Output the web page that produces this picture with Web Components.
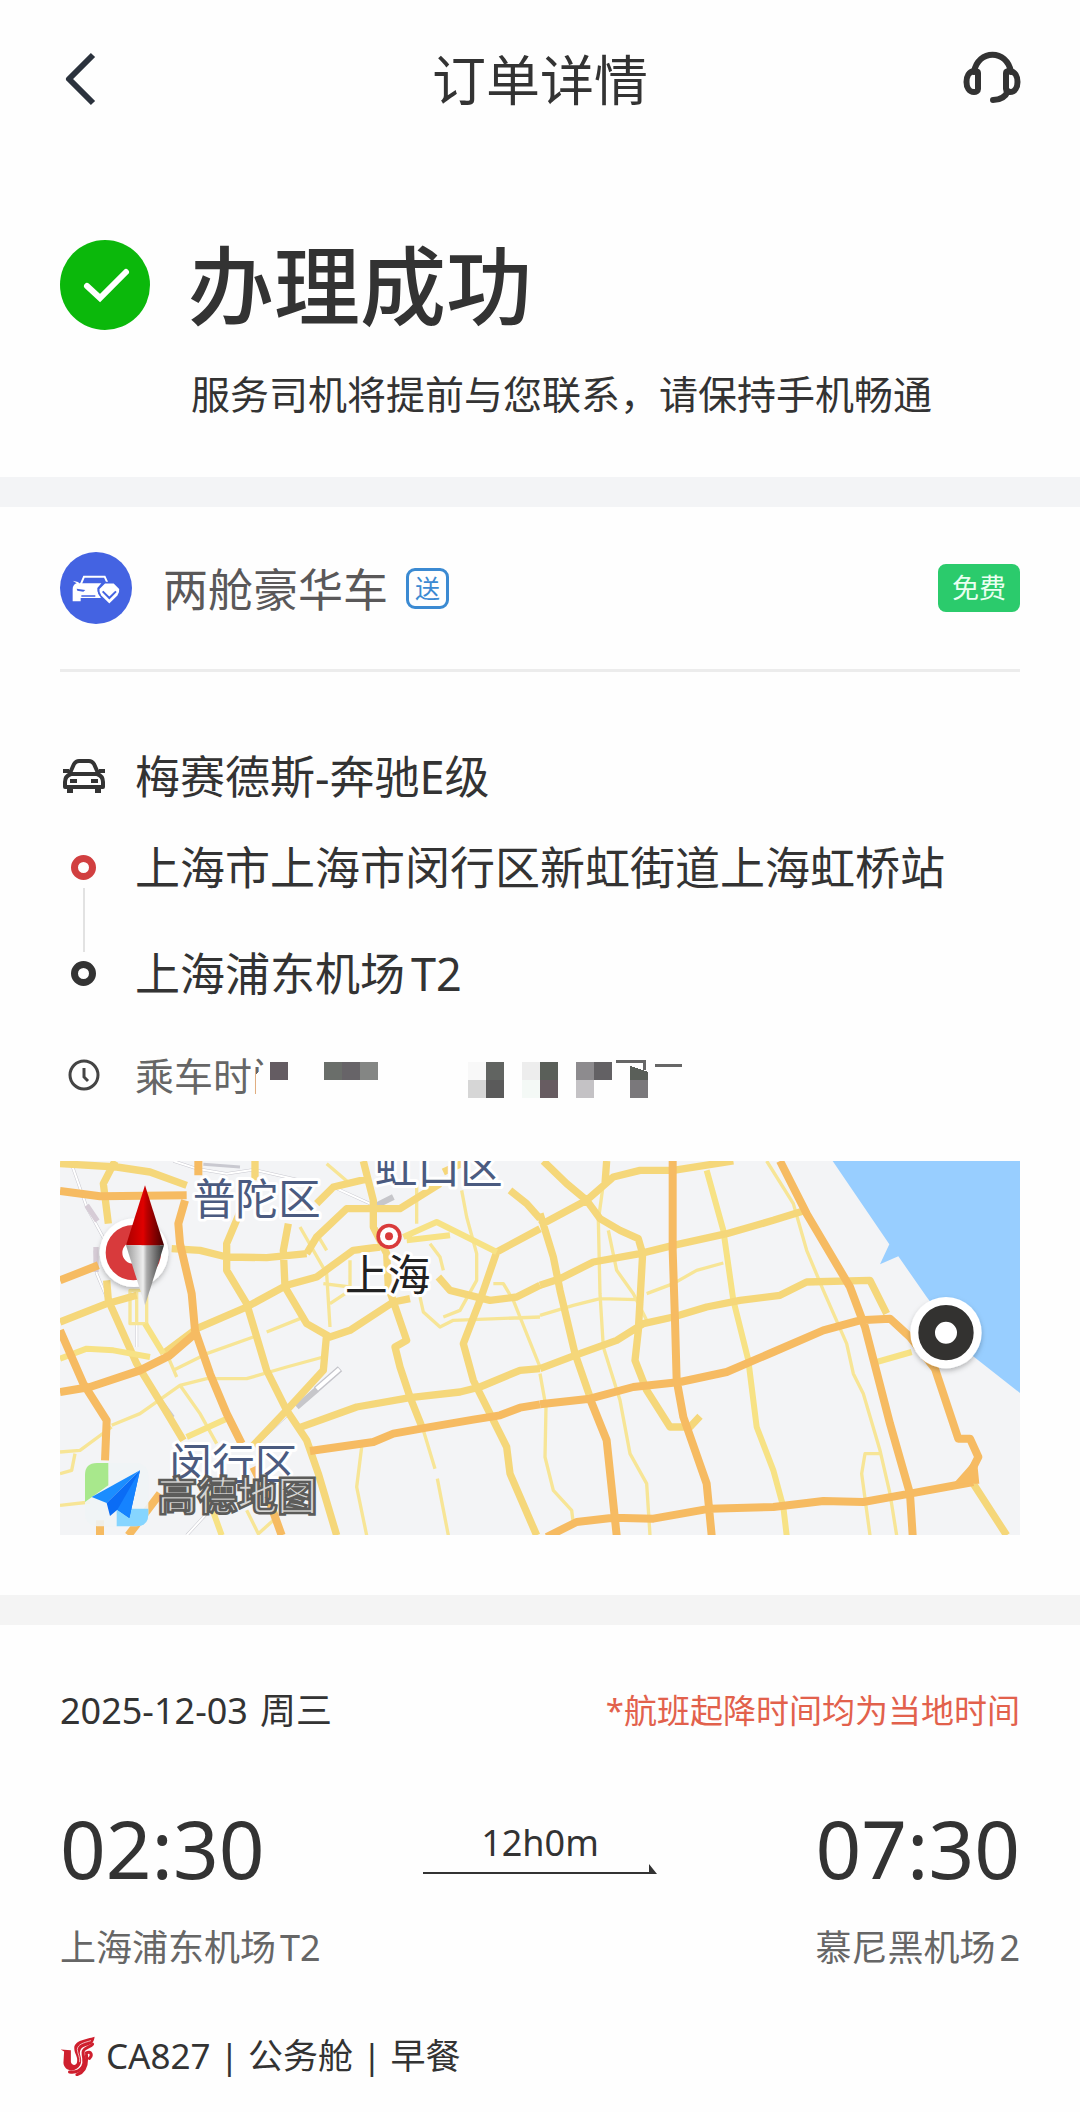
<!DOCTYPE html>
<html lang="zh-CN">
<head>
<meta charset="utf-8">
<meta name="viewport" content="width=device-width, initial-scale=1">
<title>订单详情</title>
<style>
  body {
    margin: 0;
    background: #fefefe;
    color: #333;
    font-family: "Noto Sans", "Noto Sans CJK SC", sans-serif;
  }
</style>
</head>
<body>
<order-header>订单详情</order-header>
<main>
  <order-status>
    办理成功
    <span slot="note">服务司机将提前与您联系，请保持手机畅通</span>
  </order-status>
  <ride-card></ride-card>
  <flight-card></flight-card>
</main>

<script>
// small helper: every element sets its markup the same way
class BaseElement extends HTMLElement {
  constructor() {
    super();
    this.attachShadow({ mode: "open" });
    this.shadowRoot.innerHTML = this.template();
  }
}

class OrderHeader extends BaseElement {
  template() {
    return `
      <style>
        :host { display: block; }
        header {
          display: grid;
          grid-template-columns: 60px 1fr 60px;
          align-items: center;
          height: 160px;
          padding: 0 58px;
        }
        h1 { margin: 0; font-size: 54px; font-weight: 400; line-height: 72px; text-align: center; }
        button { border: 0; padding: 0; background: none; width: 60px; height: 60px; }
        svg { display: block; width: 60px; height: 60px; fill: none; stroke-linejoin: round; }
      </style>
      <header>
        <button type="button" aria-label="返回">
          <svg viewBox="0 0 60 60" stroke="#2b323d" stroke-width="6"><path d="M35 5 L11 29 L35 53"/></svg>
        </button>
        <h1><slot></slot></h1>
        <button type="button" aria-label="客服">
          <svg viewBox="0 0 60 60" stroke="#333" stroke-width="6" stroke-linecap="round">
            <path d="M12 22 C16 -1 45 -1 49 22"/>
            <path d="M16 23 V39 C16 41 14 42 12 42 C2 42 2 22 12 21 C14 21 16 21 16 23 Z"/>
            <path d="M44 23 V39 C44 41 46 42 48 42 C58 42 58 22 48 21 C46 21 44 21 44 23 Z"/>
            <path d="M46 41 C43 48 37 50 31 50"/>
          </svg>
        </button>
      </header>`;
  }
}
customElements.define("order-header", OrderHeader);

class OrderStatus extends BaseElement {
  template() {
    return `
      <style>
        :host {
          display: grid;
          grid-template-columns: 90px 1fr;
          column-gap: 38px;
          row-gap: 36px;
          padding: 80px 60px 57px;
        }
        svg { width: 90px; height: 90px; }
        h2 { margin: 0; font-size: 86px; font-weight: 500; line-height: 92px; }
        p { grid-column: 2; margin: 0 0 0 3px; font-size: 39px; line-height: 52px; }
      </style>
      <svg viewBox="0 0 90 90" aria-hidden="true">
        <circle cx="45" cy="45" r="45" fill="#0bb80b"/>
        <path d="M27 46 L40 58 L66 32" fill="none" stroke="#fff" stroke-width="6" stroke-linecap="round"/>
      </svg>
      <h2><slot></slot></h2>
      <p><slot name="note"></slot></p>`;
  }
}
customElements.define("order-status", OrderStatus);

// one line of the trip: an icon and its text, "linked" draws the line to the next one
class RideStop extends BaseElement {
  template() {
    return `
      <style>
        :host { display: grid; grid-template-columns: 47px 1fr; column-gap: 28px; font-size: 45px; line-height: 60px; }
        .marker { display: flex; flex-direction: column; align-items: center; }
        .icon { display: flex; flex: none; align-items: center; justify-content: center; height: 58px; }
        .line { display: none; flex: 1; width: 2px; margin: -8px 0 -8px; background: #e2e2e2; }
        :host([linked]) .line { display: block; }
        :host([linked]) .text { padding-bottom: 46px; }
        :host([muted]) { font-size: 39px; color: #666; }
        .text { position: relative; }
      </style>
      <div class="marker">
        <div class="icon"><slot name="icon"></slot></div>
        <div class="line"></div>
      </div>
      <div class="text"><slot></slot></div>`;
  }
}
customElements.define("ride-stop", RideStop);

// blocks that hide the private part of the ride time
class TimeMosaic extends BaseElement {
  template() {
    const blocks = [
      [18, 0, "#645c62"],
      [72, 0, "#6a6e6a"], [90, 0, "#676468"], [108, 0, "#848684"],
      [216, 0, "#f8f8f8"], [216, 18, "#d6d6d6"], [234, 0, "#616461"], [234, 18, "#5a5a5a"],
      [270, 0, "#ededed"], [270, 18, "#f4f9f6"], [288, 0, "#5a5f59"], [288, 18, "#675c61"],
      [324, 0, "#8d8b8e"], [324, 18, "#c4c2c5"], [342, 0, "#636164"],
      [378, 18, "#7a787b"]
    ];
    const rects = blocks.map(([x, y, c]) => `<rect x="${x}" y="${y + 6}" width="18" height="18" fill="${c}"/>`).join("");
    return `
      <style>
        :host { position: absolute; left: 117px; top: 10px; }
        svg { display: block; width: 432px; height: 50px; }
      </style>
      <svg viewBox="0 0 432 50" shape-rendering="crispEdges" aria-hidden="true">
        <path d="M12 0 H432 V50 H0 V38 H4 V18 L12 12 Z" fill="#fefefe"/>
        ${rects}
        <path d="M378 10 L396 16 V24 H378 Z" fill="#5a5f59"/>
        <path d="M364 5 H392 V14 M403 9 H430" fill="none" stroke="#666" stroke-width="3"/>
      </svg>`;
  }
}
customElements.define("time-mosaic", TimeMosaic);

class CityMap extends BaseElement {
  template() {
    return `
      <style>
        :host { display: block; }
        svg { display: block; width: 100%; height: auto; font-size: 128px; }
        .thin, .road, .main, .rail { fill: none; stroke-linejoin: round; }
        .thin { stroke: #f7e596; stroke-width: 10; }
        .road { stroke: #f5d77a; stroke-width: 22; }
        .light { stroke: #f7e285; stroke-width: 18; }
        .main { stroke: #f6bb62; stroke-width: 24; }
        .rail { stroke: #c9c9d0; stroke-width: 9; }
        .rail-in { stroke: #fff; stroke-width: 6; }
        .district { fill: #4b5b80; }
        .label { stroke: #fff; stroke-width: 18; stroke-linejoin: round; paint-order: stroke; text-anchor: middle; }
        .city { fill: #222; }
        .brand { fill: #d6d6d4; stroke: #5c5c5a; stroke-width: 8; font-size: 120px; font-weight: 700; }
      </style>
      <svg viewBox="60 62 2880 1123" role="img" aria-label="路线地图">
        <defs>
          <linearGradient id="north"><stop offset="0" stop-color="#a00"/><stop offset=".45" stop-color="#e00000"/><stop offset=".55" stop-color="#b00"/><stop offset="1" stop-color="#400"/></linearGradient>
          <linearGradient id="south"><stop offset="0" stop-color="#999"/><stop offset=".45" stop-color="#eee"/><stop offset=".55" stop-color="#aaa"/><stop offset="1" stop-color="#333"/></linearGradient>
          <filter id="shade" x="-20%" y="-20%" width="140%" height="150%"><feDropShadow dx="0" dy="8" stdDeviation="8" flood-opacity=".25"/></filter>
        </defs>
        <rect x="60" y="62" width="2880" height="1123" fill="#f3f4f6"/>
        <path d="M2378 62 L2548 312 2520 372 2575 348 2660 470 2790 640 2940 758 V62 Z" fill="#98ceff"/>

        <!-- west side -->
        <path class="thin" d="M215 855 L300 820 420 735 500 715 620 715 740 680 850 650 M400 690 L500 640 640 590 M680 575 L780 535 M60 935 L120 930 215 860 M60 1000 L95 990 105 940 M420 735 L480 820 530 910 M1150 870 L1185 985 M1192 1015 L1225 1185 M965 920 L950 1040 980 1185 M1140 470 L1150 515 1200 560 1240 540 1500 530 M1170 310 L1200 350 1210 390 M1265 150 L1280 230 1310 340 1310 420 1260 510 1210 530 M780 260 L860 400 870 560 M830 280 L860 330 M850 430 L930 440 M930 360 L930 450 870 490 M380 640 L410 710 M1360 430 L1390 430 1420 480 1500 680 M60 1095 L150 1085 M860 70 L930 130 M620 1110 L655 1180 700 1140 M1130 130 V250"/>
        <path class="rail" d="M95 72 L140 200 200 310 M165 330 L170 400 250 590 290 680 400 830 M290 550 V620 M400 62 L470 85 560 100 640 88 780 120 M490 72 L600 80 M880 140 L990 190 M440 1185 L500 1120 M645 915 L740 825"/>
        <path class="rail rail-in" d="M95 72 L140 200 200 310 M165 330 L170 400 250 590 M290 550 V620 M400 62 L470 85 560 100 640 88 780 120 M880 140 L990 190 M440 1185 L500 1120 M645 915 L740 825"/>
        <path d="M140 195 L172 242 M168 320 V395" stroke="#d6ccd6" stroke-width="16"/>
        <path d="M770 800 L830 748 M1010 195 L1060 170" stroke="#c6c6ca" stroke-width="18"/>
        <path d="M828 748 L900 685" stroke="#c4c4ca" stroke-width="20"/>
        <path d="M830 746 L898 687" stroke="#fff" stroke-width="12"/>
        <path class="thin" d="M270 450 H320 V550 H270 Z M290 450 V550"/>
        <path class="road" d="M60 70 L230 80 330 95 440 135 M225 62 L190 130 205 250 M200 420 L205 480 290 670 370 800 430 900 M60 545 L200 490 290 465 M395 325 L480 330 560 350 680 352 800 340 M600 215 L560 310 560 390 620 490 680 690 740 810 800 900 835 1000 890 1185 M370 640 L470 565 620 500 740 435 830 410 940 330 1020 320 M745 250 L730 330 735 440 800 550 870 590 930 570 1060 485 1110 475 M860 580 L850 690 740 810 640 915 M800 340 L830 290 920 205 1080 205 1200 130 M970 62 L1000 180 1000 260 1040 340 1045 440 1100 600 1065 620 1080 680 1110 770 1150 870 M770 865 L950 800 1110 772 1260 755 1320 740 1440 690 1500 685 M1410 150 L1460 190 1500 235 M1500 265 L1370 335 1320 480 1270 610 1300 720 1350 820 1400 920 1410 1000 1490 1185 M1195 410 L1230 450 1350 480 1430 470 1500 435 M1210 95 L1275 65 M830 190 L880 140 985 115 M645 62 V120"/>
        <path class="road light" d="M1090 290 L1190 245 1370 335 M1100 300 L1230 285 M60 655 L140 625 220 630 330 650 M315 550 L370 640 M500 1060 L545 1185 M440 890 L560 835"/>
        <path class="main" d="M60 152 L180 168 440 165 M475 62 V105 M435 180 L415 250 420 310 455 460 465 570 510 700 560 820 605 910 M60 755 L150 740 300 690 390 645 465 580 M60 420 L175 375 M60 570 L130 730 200 840 195 960 M180 1140 V1185 M810 932 L1000 905 1060 880 1160 862 1300 838 1380 825 1440 802 1500 792 M640 980 L680 1060 725 1185 M360 1060 L265 1185"/>

        <!-- east side -->
        <g transform="translate(1500 0)">
          <path class="thin" d="M0 525 L100 495 180 475 290 478 M190 130 L175 240 180 460 190 620 240 780 270 940 320 1030 330 1185 M205 270 L230 390 280 460 320 540 M320 460 L400 430 470 390 550 368 M680 62 L760 190 800 330 850 450 920 610 940 700 970 760 1020 930 1050 1060 1070 1185 M1020 940 H975 L965 1000 990 1185 M0 700 L18 800 15 950 40 1050 95 1110 100 1150"/>
          <path class="road light" d="M500 90 L550 270 580 480 625 660 650 860 700 990 730 1100 740 1185 M1010 665 L1115 635"/>
          <path class="road" d="M10 62 L80 130 140 180 180 235 240 270 295 295 308 340 295 570 285 660 320 750 390 860 450 860 480 828 M0 255 L140 180 220 110 300 90 400 90 580 62 M200 62 L195 130 M0 220 L40 350 60 450 105 640 150 770 M0 435 L60 415 160 365 300 340 400 315 560 280 700 240 790 212 M0 685 L105 645 230 600 310 550 400 530 500 500 600 480 720 465 800 425 990 420 1040 520 M1300 1030 L1400 1185"/>
          <path class="main" d="M398 62 V330 L405 540 410 720 430 830 500 1030 515 1185 M720 62 L800 220 930 440 975 560 1050 850 1110 1060 1118 1185 M0 792 L150 775 280 740 420 725 560 695 700 635 850 570 960 540 1050 535 1110 590 1185 685 L1255 895 1290 895 1315 950 1285 1010 M20 1190 L110 1145 220 1132 340 1135 510 1105 700 1100 850 1082 970 1085 1110 1060 1300 1025 M150 775 L200 900 230 1185"/>
          <path d="M1310 950 L1318 1030 1240 1030 1280 985 Z" fill="#f6bb62"/>
        </g>

        <text class="label district" x="650" y="225">普陀区</text>
        <text class="label district" x="1196" y="132">虹口区</text>
        <text class="label district" x="580" y="1020">闵行区</text>
        <text class="label city" x="1043" y="452">上海</text>
        <circle cx="1047" cy="288" r="38" fill="#d93b3b"/>
        <circle cx="1047" cy="288" r="27" fill="#fff"/>
        <circle cx="1047" cy="288" r="12" fill="#d93b3b"/>

        <!-- start and end pins -->
        <g filter="url(#shade)"><circle cx="282" cy="337" r="103" fill="#fff"/><circle cx="2718" cy="577" r="107" fill="#fff"/></g>
        <circle cx="280" cy="337" r="58" fill="none" stroke="#d83a3c" stroke-width="50"/>
        <circle cx="2718" cy="577" r="58" fill="none" stroke="#333230" stroke-width="50"/>
        <path d="M315 135 L372 315 H258 Z" fill="url(#north)"/>
        <path d="M315 495 L372 315 H258 Z" fill="url(#south)"/>

        <!-- map provider -->
        <rect x="135" y="968" width="190" height="190" rx="36" fill="#f0f4f6" opacity=".9"/>
        <path d="M171 968 H205 V1035 L135 1085 V1004 Q135 968 171 968 Z" fill="#a8e88c"/>
        <path d="M230 1105 H325 V1122 Q325 1158 289 1158 H230 Z" fill="#86d5ff"/>
        <path d="M300 990 L155 1070 200 1088 Z" fill="#1b8dff"/>
        <path d="M300 990 L200 1088 210 1127 232 1108 268 1133 Z" fill="#0a6cf5"/>
        <path d="M300 990 L232 1108 268 1133 Z" fill="#1583ff"/>
        <text class="brand" x="352" y="1108">高德地图</text>
      </svg>`;
  }
}
customElements.define("city-map", CityMap);

class RideCard extends BaseElement {
  template() {
    return `
      <style>
        :host { display: block; border-top: 30px solid #f3f4f6; padding: 0 60px 60px; }
        .head { display: flex; align-items: center; height: 162px; border-bottom: 3px solid #ececec; }
        .head svg { width: 72px; height: 72px; margin-right: 31px; }
        h3 { margin: 0; font-size: 45px; font-weight: 400; line-height: 60px; padding-top: 3px; color: #5a5859; }
        .tag {
          margin-left: 18px;
          padding: 0 6px;
          border: 3px solid #3b8ad2;
          border-radius: 9px;
          color: #3b8ad2;
          font-size: 25px;
          line-height: 35px;
        }
        .free {
          margin-left: auto;
          padding: 0 14px;
          border-radius: 8px;
          background: #2bcb6c;
          color: #eafff1;
          font-size: 27px;
          line-height: 48px;
        }
        .trip { display: grid; padding: 75px 0 55px; }
        ride-stop:first-child { margin-bottom: 31px; }
        ride-stop[muted] { margin-top: 42px; }
        .latin { margin-left: 6px; }
        ride-stop svg { display: block; }
      </style>
      <section>
        <div class="head">
          <svg viewBox="0 0 216 216" aria-hidden="true">
            <circle cx="108" cy="108" r="108" fill="#4463e2"/>
            <path d="M62 98 L72 74 H134 L142 92" fill="none" stroke="#fff" stroke-width="6"/>
            <path d="M38 86 L54 90 L58 94 H124 L112 108 Q112 128 122 132 V138 H62 V148 H38 V112 Q38 98 50 94 Z" fill="#fff"/>
            <path d="M50 110 L76 114 L70 119 L52 116 Z M64 130 H106 V134 H64 Z" fill="#4463e2"/>
            <path d="M134 92 H162 L180 110 Q182 122 174 132 L148 158 L122 132 Q114 122 116 110 Z" fill="#fff" stroke="#4463e2" stroke-width="5"/>
            <path d="M128 118 L148 138 L168 118" fill="none" stroke="#4463e2" stroke-width="6"/>
          </svg>
          <h3>两舱豪华车</h3>
          <span class="tag">送</span>
          <span class="free">免费</span>
        </div>
        <div class="trip">
          <ride-stop>
            <svg slot="icon" width="44" height="36" viewBox="0 0 44 36" fill="none" stroke="#333" stroke-width="4" stroke-linejoin="round" aria-hidden="true">
              <path d="M8 15 L12 6 Q14 3 17 3 H27 Q30 3 32 6 L36 15 M1 13 H7 M37 13 H43"/>
              <path d="M9 16 H35 Q41 18 41 24 V29 H3 V24 Q3 18 9 16 Z"/>
              <path d="M8 29 V35 M36 29 V35" stroke-width="6"/>
              <path d="M8 23 H15 M29 23 H36" stroke-width="4"/>
            </svg>
            梅赛德斯-奔驰E级
          </ride-stop>
          <ride-stop linked>
            <svg slot="icon" width="25" height="25" viewBox="0 0 25 25" aria-hidden="true"><circle cx="12.5" cy="12.5" r="9" fill="none" stroke="#d13f40" stroke-width="7"/></svg>
            上海市上海市闵行区新虹街道上海虹桥站
          </ride-stop>
          <ride-stop>
            <svg slot="icon" width="25" height="25" viewBox="0 0 25 25" aria-hidden="true"><circle cx="12.5" cy="12.5" r="9" fill="none" stroke="#333" stroke-width="7"/></svg>
            上海浦东机场<span class="latin">T2</span>
          </ride-stop>
          <ride-stop muted>
            <svg slot="icon" width="32" height="32" viewBox="0 0 32 32" fill="none" stroke="#444" stroke-width="3" aria-hidden="true"><circle cx="16" cy="16" r="14"/><path d="M16 9 V18 L20 22"/></svg>
            乘车时间<time-mosaic></time-mosaic>
          </ride-stop>
        </div>
        <city-map></city-map>
      </section>`;
  }
}
customElements.define("ride-card", RideCard);

class FlightCard extends BaseElement {
  template() {
    return `
      <style>
        :host { display: block; border-top: 30px solid #f4f4f4; padding: 62px 60px 32px; font-size: 36px; line-height: 48px; }
        .date { display: flex; justify-content: space-between; }
        .tip { color: #e2614c; font-size: 33px; }
        .day { margin-left: 12px; }
        .latin { margin-left: 4px; }
        .route { display: grid; grid-template-columns: 1fr 234px 1fr; align-items: center; row-gap: 28px; margin: 65px 0 60px; }
        .time { font-size: 80px; line-height: 96px; }
        .place { color: #666; }
        .end { text-align: right; }
        .duration { padding-bottom: 4px; text-align: center; }
        .duration svg { display: block; width: 100%; height: 10px; margin-top: -3px; }
        .flight { display: flex; align-items: center; gap: 10px; font-size: 35px; }
        .flight svg { width: 36px; height: 40px; }
      </style>
      <section>
        <div class="date">
          <span>2025-12-03<span class="day">周三</span></span>
          <span class="tip">*航班起降时间均为当地时间</span>
        </div>
        <div class="route">
          <div class="time">02:30</div>
          <div class="duration">
            12h0m
            <svg viewBox="0 0 234 10" aria-hidden="true"><path d="M0 8 H226 V0 L234 10 H0 Z" fill="#333"/></svg>
          </div>
          <div class="time end">07:30</div>
          <div class="place">上海浦东机场<span class="latin">T2</span></div>
          <div></div>
          <div class="place end">慕尼黑机场<span class="latin">2</span></div>
        </div>
        <div class="flight">
          <svg viewBox="30 50 106 118" fill="none" stroke="#cf1f2e" stroke-linecap="round" aria-hidden="true">
            <path d="M132 52 C108 60 72 62 72 86 C72 104 84 110 80 128 C78 138 64 138 62 126 L62 92 L32 90 L42 96 L40 130 C42 150 64 158 80 146 C94 136 94 122 90 108 C86 96 90 84 104 80 C118 76 130 72 132 52 Z" fill="#cf1f2e" stroke="none"/>
            <path d="M126 74 C120 84 98 84 98 98 C98 118 106 126 96 142 C88 154 74 158 58 156" stroke-width="9"/>
            <path d="M108 100 C122 92 126 108 117 116 M108 106 C110 130 104 156 80 164" stroke-width="9"/>
            <path d="M120 64 C100 70 82 74 81 90 C82 104 90 112 88 126" stroke="#fff" stroke-width="2"/>
          </svg>
          <span>CA827 | 公务舱 | 早餐</span>
        </div>
      </section>`;
  }
}
customElements.define("flight-card", FlightCard);
</script>
</body>
</html>
